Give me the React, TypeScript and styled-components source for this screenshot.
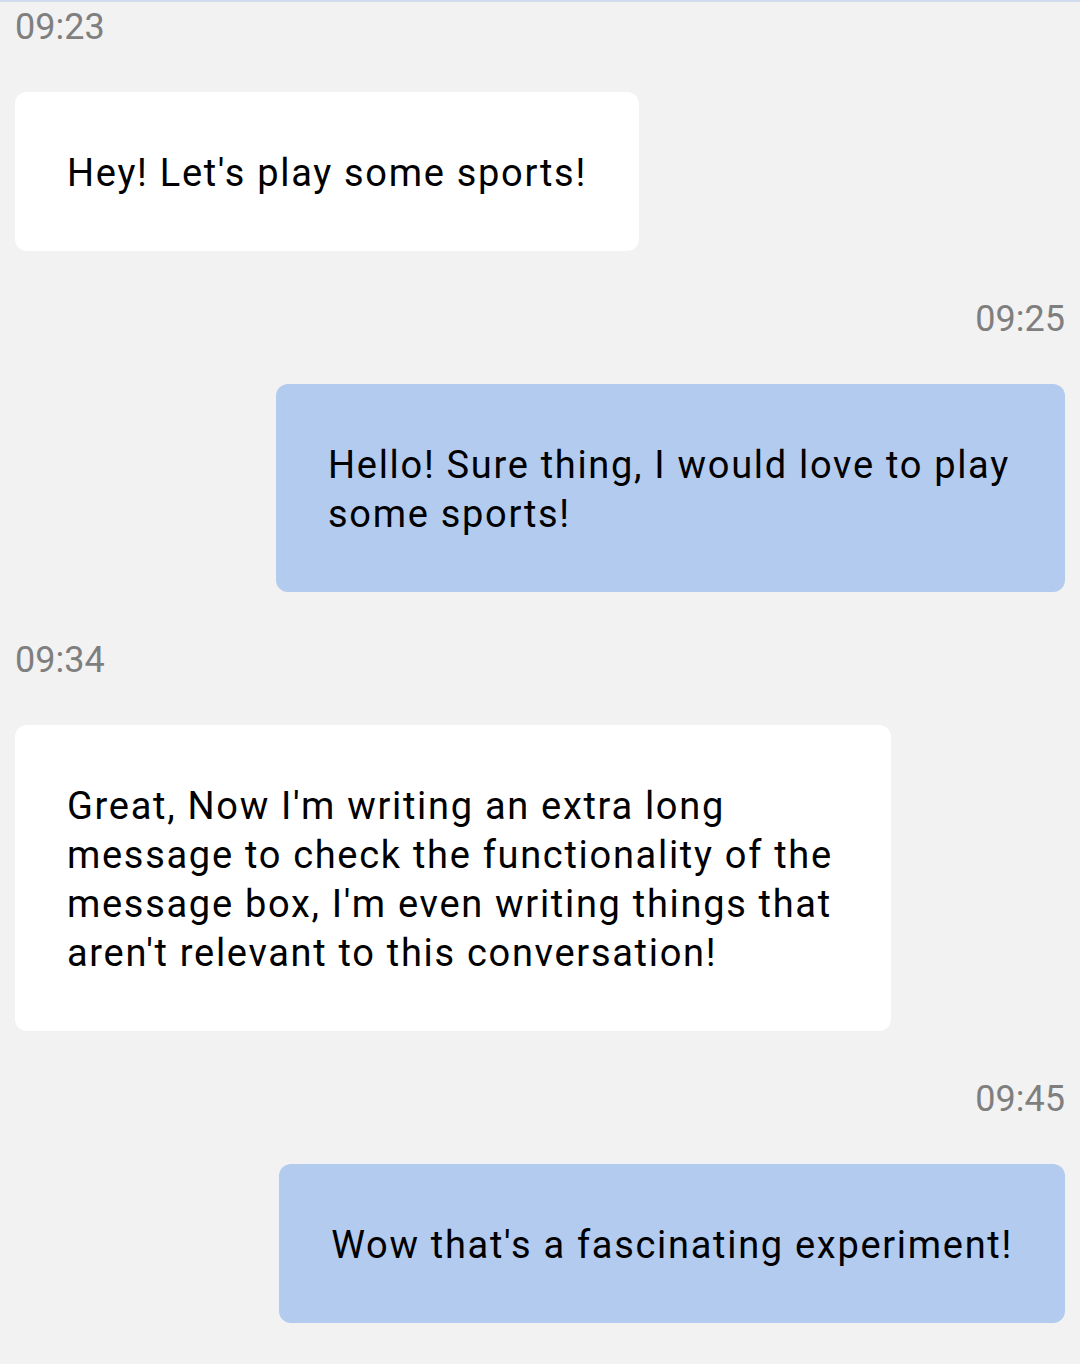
import React from "react";
import styled, { createGlobalStyle } from "styled-components";

const GlobalStyle = createGlobalStyle`
  html, body {
    margin: 0;
    padding: 0;
    background: #f2f2f2;
  }
  body {
    font-family: Roboto, "Noto Sans", "Liberation Sans", sans-serif;
    -webkit-font-smoothing: antialiased;
  }
`;

const Page = styled.main`
  min-height: 1364px;
  box-sizing: border-box;
  background: #f2f2f2;
  border-top: 2px solid #cfdcee;
  padding: 3px 15px 41px;
  display: flex;
  flex-direction: column;
  gap: 46px;
`;

const Group = styled.section<{ $mine: boolean }>`
  display: flex;
  flex-direction: column;
  align-items: ${(p) => (p.$mine ? "flex-end" : "flex-start")};
`;

const Time = styled.div`
  font-size: 36px;
  line-height: 44px;
  color: #7f7f7f;
  margin-bottom: 43px;
`;

const Bubble = styled.div<{ $mine: boolean }>`
  box-sizing: border-box;
  max-width: ${(p) => (p.$mine ? "789px" : "876px")};
  padding: 57px 52px 53px;
  border-radius: 12px;
  background: ${(p) => (p.$mine ? "#b3cbef" : "#ffffff")};
  color: #000000;
  font-size: 38px;
  line-height: 49px;
  letter-spacing: 1.7px;
`;

type Message = { time: string; text: string; mine: boolean };

const messages: Message[] = [
  { time: "09:23", text: "Hey! Let's play some sports!", mine: false },
  {
    time: "09:25",
    text: "Hello! Sure thing, I would love to play some sports!",
    mine: true,
  },
  {
    time: "09:34",
    text:
      "Great, Now I'm writing an extra long message to check the functionality of the message box, I'm even writing things that aren't relevant to this conversation!",
    mine: false,
  },
  { time: "09:45", text: "Wow that's a fascinating experiment!", mine: true },
];

export default function App() {
  return (
    <>
      <GlobalStyle />
      <Page>
        {messages.map((m) => (
          <Group key={m.time} $mine={m.mine}>
            <Time>{m.time}</Time>
            <Bubble $mine={m.mine}>{m.text}</Bubble>
          </Group>
        ))}
      </Page>
    </>
  );
}
